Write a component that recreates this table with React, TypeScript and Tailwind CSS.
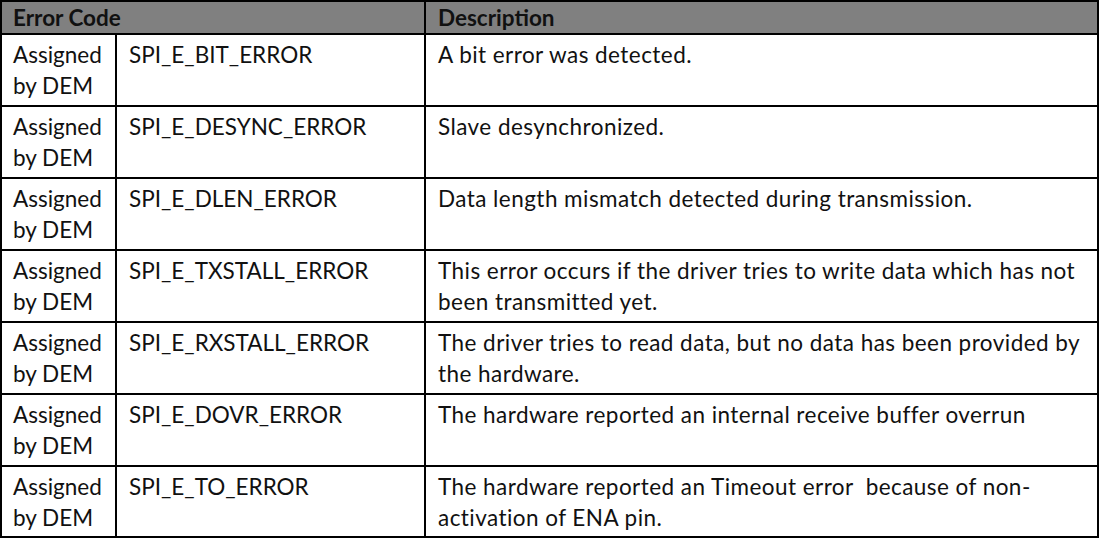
import React from "react";

const rows: { code: string; desc: string[] }[] = [
  { code: "SPI_E_BIT_ERROR", desc: ["A bit error was detected."] },
  { code: "SPI_E_DESYNC_ERROR", desc: ["Slave desynchronized."] },
  { code: "SPI_E_DLEN_ERROR", desc: ["Data length mismatch detected during transmission."] },
  {
    code: "SPI_E_TXSTALL_ERROR",
    desc: ["This error occurs if the driver tries to write data which has not", "been transmitted yet."],
  },
  {
    code: "SPI_E_RXSTALL_ERROR",
    desc: ["The driver tries to read data, but no data has been provided by", "the hardware."],
  },
  { code: "SPI_E_DOVR_ERROR", desc: ["The hardware reported an internal receive buffer overrun"] },
  {
    code: "SPI_E_TO_ERROR",
    desc: ["The hardware reported an Timeout error  because of non-", "activation of ENA pin."],
  },
];

export default function App() {
  return (
    <div className="w-[1100px] h-[539px] bg-white">
      <div
        className="grid w-[1099px] grid-cols-[113px_307px_671px] grid-rows-[31px_repeat(6,70px)_69px] gap-[2px] bg-black p-[2px] text-[22.5px] leading-[31px] text-[#111] whitespace-pre"
        style={{ fontFamily: "Lato, 'Liberation Sans', sans-serif" }}
      >
        <div className="col-span-2 bg-[#808080] pl-[11px] font-bold">Error Code</div>
        <div className="bg-[#808080] pl-[12px] font-bold">Description</div>

        {rows.map((r) => (
          <React.Fragment key={r.code}>
            <div className="bg-white pl-[11px] pt-[4px]">
              <div>Assigned</div>
              <div>by DEM</div>
            </div>
            <div className="bg-white pl-[12px] pt-[4px]">{r.code}</div>
            <div className="bg-white pl-[12px] pt-[4px] tracking-[0.45px]">
              {r.desc.map((d) => (
                <div key={d}>{d}</div>
              ))}
            </div>
          </React.Fragment>
        ))}
      </div>
    </div>
  );
}
